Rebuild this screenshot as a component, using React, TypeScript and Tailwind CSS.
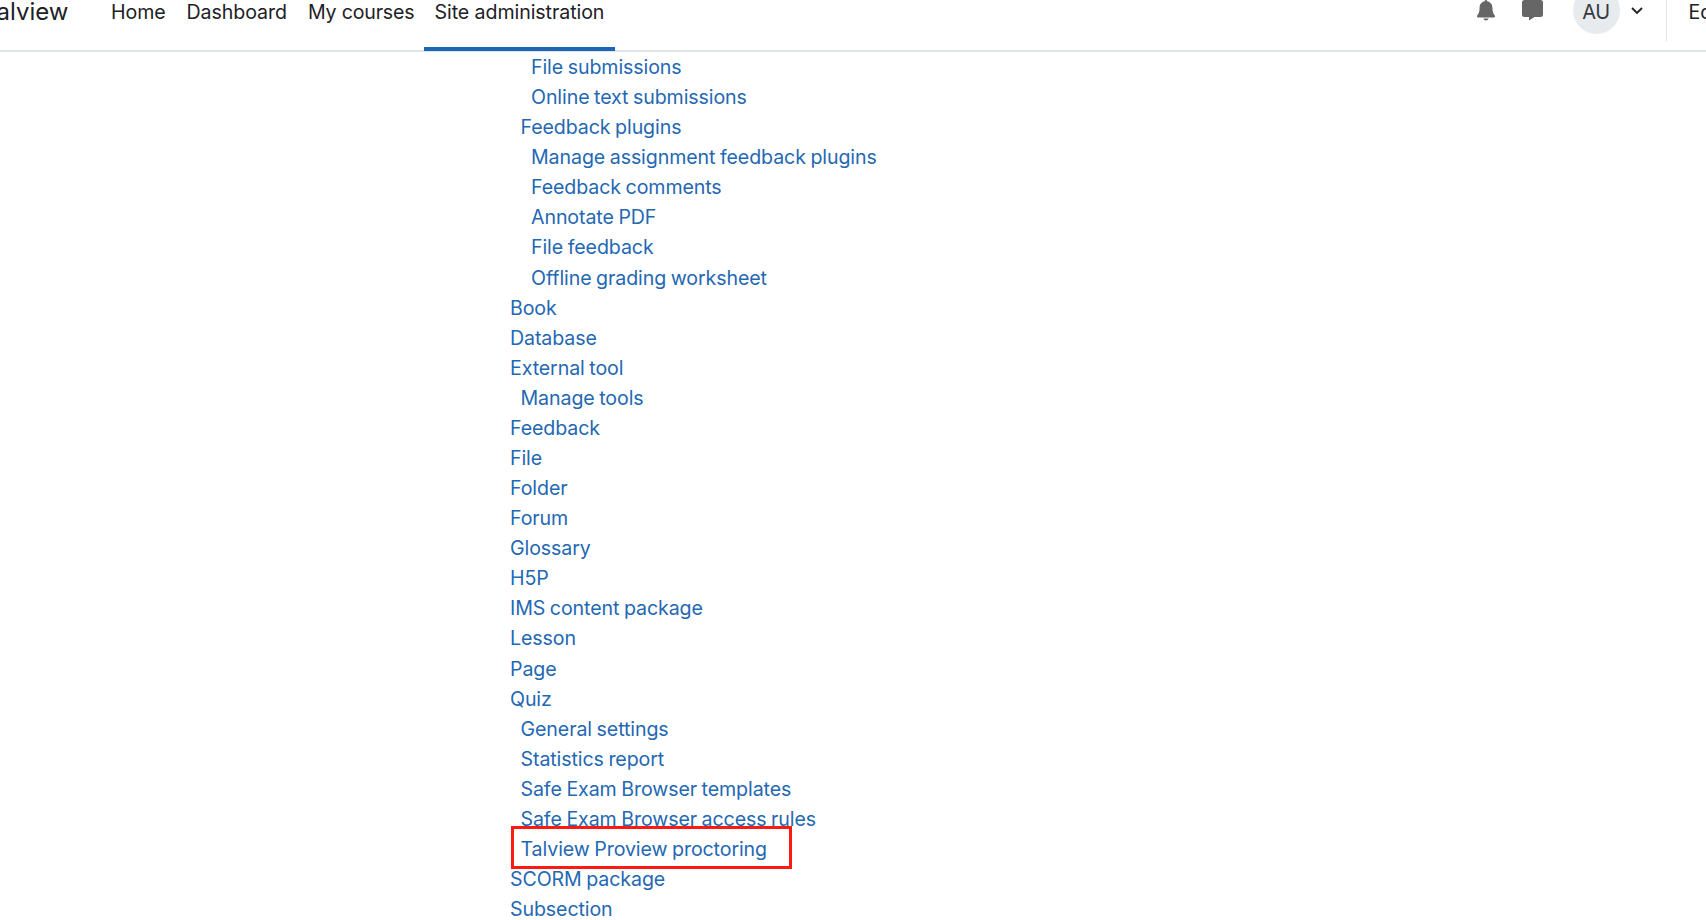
type Entry = { label: string; level: 0 | 1 | 2; highlighted?: boolean };

const entries: Entry[] = [
  { label: "File submissions", level: 2 },
  { label: "Online text submissions", level: 2 },
  { label: "Feedback plugins", level: 1 },
  { label: "Manage assignment feedback plugins", level: 2 },
  { label: "Feedback comments", level: 2 },
  { label: "Annotate PDF", level: 2 },
  { label: "File feedback", level: 2 },
  { label: "Offline grading worksheet", level: 2 },
  { label: "Book", level: 0 },
  { label: "Database", level: 0 },
  { label: "External tool", level: 0 },
  { label: "Manage tools", level: 1 },
  { label: "Feedback", level: 0 },
  { label: "File", level: 0 },
  { label: "Folder", level: 0 },
  { label: "Forum", level: 0 },
  { label: "Glossary", level: 0 },
  { label: "H5P", level: 0 },
  { label: "IMS content package", level: 0 },
  { label: "Lesson", level: 0 },
  { label: "Page", level: 0 },
  { label: "Quiz", level: 0 },
  { label: "General settings", level: 1 },
  { label: "Statistics report", level: 1 },
  { label: "Safe Exam Browser templates", level: 1 },
  { label: "Safe Exam Browser access rules", level: 1 },
  { label: "Talview Proview proctoring", level: 1, highlighted: true },
  { label: "SCORM package", level: 0 },
  { label: "Subsection", level: 0 },
];

const indent = { 0: "pl-0", 1: "pl-[10.5px]", 2: "pl-[21px]" };

function Header() {
  return (
    <header className="flex h-[52px] shrink-0 items-start justify-between border-b-2 border-[#e1e4e7] bg-white text-[#1d2125]">
      <div className="flex items-start">
        <div className="flex w-[100px] shrink-0 justify-end pr-[31.5px] text-[24px] leading-[23px]">
          <a href="#" className="whitespace-nowrap">Talview</a>
        </div>
        <nav className="flex text-[19.6px] leading-[24px] tracking-[-0.08px] whitespace-nowrap">
          <a href="#" className="h-[51px] w-[76px] pl-[11px]">Home</a>
          <a href="#" className="h-[51px] w-[121px] pl-[10.5px]">Dashboard</a>
          <a href="#" className="h-[51px] w-[127px] pl-[11px] tracking-[-0.2px]">My courses</a>
          <a href="#" className="h-[51px] w-[191px] border-b-4 border-[#1b66b5] pl-[10.5px]">Site administration</a>
        </nav>
      </div>
      <div className="flex items-start">
        <svg className="mr-[27px] h-[21px] w-[18px]" viewBox="0 0 18 21" fill="#666">
          <path d="M9 0C8.300 0 7.900.5 7.900 1.200 4.700 1.800 2.600 4.200 2.600 7.600c0 4.200-.9 6.200-2.300 7.900-.8 1-.2 2.100.9 2.100h15.600c1.100 0 1.700-1.100.9-2.100-1.400-1.700-2.300-3.700-2.300-7.900 0-3.400-2.100-5.800-5.300-6.400C10.100.5 9.700 0 9 0zM6.500 18.500h5c-.2 1.200-1.200 2-2.500 2s-2.300-.8-2.500-2z" />
        </svg>
        <svg className="mr-[30px] h-[21px] w-[21px]" viewBox="0 0 21 21" fill="#666">
          <path d="M2.500 0h16Q21 0 21 2.500v12Q21 17 18.500 17h-6l-5.500 3.500V17H2.500Q0 17 0 14.500V2.500Q0 0 2.500 0z" />
        </svg>
        <div className="mt-[-13px] flex size-[47px] items-center justify-center rounded-full bg-[#e8ebee] pt-[2px] text-[20px] tracking-[-0.3px] text-[#343a40]">AU</div>
        <svg className="mt-[6px] ml-[11px] h-[10px] w-[12px]" viewBox="0 0 12 10" fill="none" stroke="#1d2125" strokeWidth="1.8">
          <path d="M1 2l5 5 5-5" />
        </svg>
        <div className="ml-[23px] h-[41px] w-[1.5px] bg-[#e1e4e7]" />
        <div className="w-[39px] overflow-hidden pl-[21.5px] text-[19.6px] leading-[24px] whitespace-nowrap">Edit mode</div>
      </div>
    </header>
  );
}

export default function App() {
  return (
    <div className="flex h-[920px] w-full flex-col overflow-hidden bg-white font-['Inter',sans-serif] font-[380]">
      <Header />
      <ul className="flex flex-col pl-[510px] text-[19.6px] tracking-[-0.1px] text-[#2468b3] [word-spacing:-0.8px]">
        {entries.map((entry) => (
          <li key={entry.label} className={`${indent[entry.level]} h-[30.08px] shrink-0 leading-[30.08px] whitespace-nowrap`}>
            <span className="relative">
              <a href="#">{entry.label}</a>
              {entry.highlighted && (
                <span className="pointer-events-none absolute top-[-11px] left-[-10px] h-[43px] w-[281px] border-2 border-[#fb1b13] outline-1 -outline-offset-3 outline-[#fb1b13]" />
              )}
            </span>
          </li>
        ))}
      </ul>
    </div>
  );
}
